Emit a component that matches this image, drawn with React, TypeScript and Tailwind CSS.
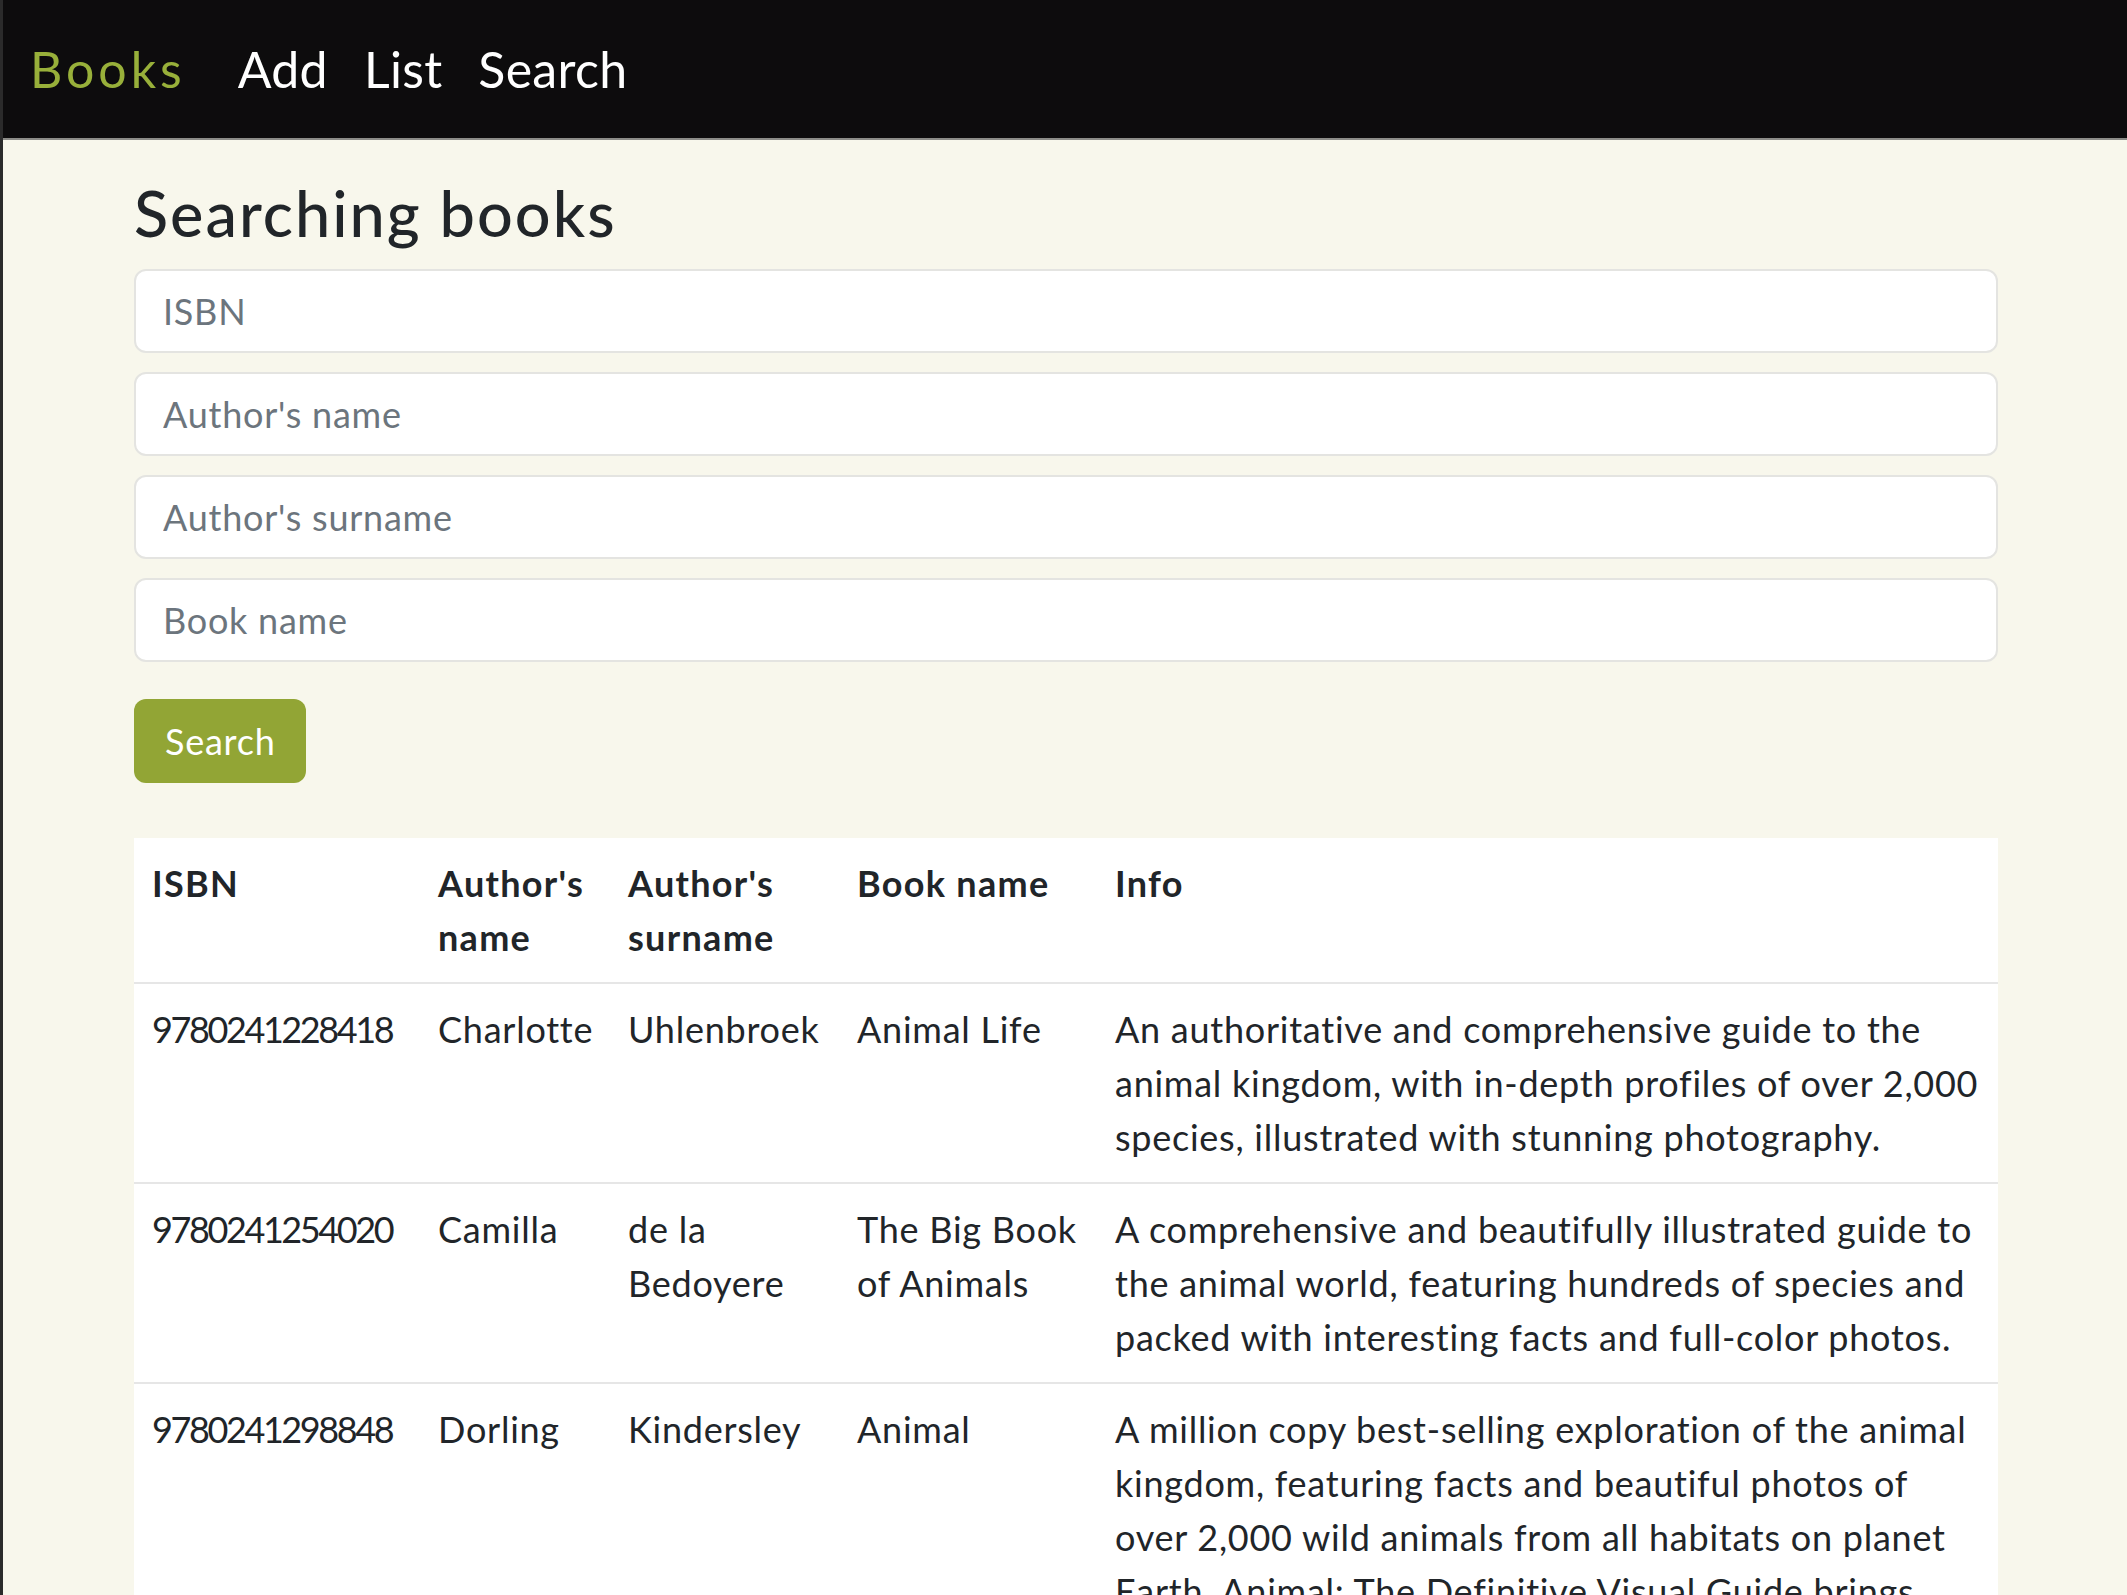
import React from "react";

type Book = {
  isbn: string;
  name: string;
  surname: string;
  title: string;
  info: string;
};

const books: Book[] = [
  {
    isbn: "9780241228418",
    name: "Charlotte",
    surname: "Uhlenbroek",
    title: "Animal Life",
    info: "An authoritative and comprehensive guide to the animal kingdom, with in-depth profiles of over 2,000 species, illustrated with stunning photography.",
  },
  {
    isbn: "9780241254020",
    name: "Camilla",
    surname: "de la Bedoyere",
    title: "The Big Book of Animals",
    info: "A comprehensive and beautifully illustrated guide to the animal world, featuring hundreds of species and packed with interesting facts and full-color photos.",
  },
  {
    isbn: "9780241298848",
    name: "Dorling",
    surname: "Kindersley",
    title: "Animal",
    info: "A million copy best-selling exploration of the animal kingdom, featuring facts and beautiful photos of over 2,000 wild animals from all habitats on planet Earth. Animal: The Definitive Visual Guide brings together the expertise of leading zoologists.",
  },
];

const fields = ["ISBN", "Author's name", "Author's surname", "Book name"];

export default function App() {
  return (
    <div className="min-h-screen border-l-[3px] border-[#2b2b2b] bg-[#f8f7ec] font-['Lato',sans-serif] text-[#212529]">
      <nav className="flex h-[140px] items-center border-b-2 border-[#8c8c88] bg-[#0d0c0d] pl-[27px] text-[50px] tracking-[0.3px]">
        <a href="#" className="mr-[34px] tracking-[4px] text-[#98b03a]">
          Books
        </a>
        <a href="#" className="px-[18px] text-white">
          Add
        </a>
        <a href="#" className="px-[18px] text-white">
          List
        </a>
        <a href="#" className="px-[18px] text-white">
          Search
        </a>
      </nav>

      <main className="pl-[131px] pr-[129px] pt-[35px]">
        <h3 className="mb-[18px] text-[63px] font-medium leading-[1.2] tracking-[2px]">Searching books</h3>

        <form className="flex flex-col gap-[19px]" onSubmit={(e) => e.preventDefault()}>
          {fields.map((f) => (
            <input
              key={f}
              placeholder={f}
              className="h-[84px] w-full rounded-[12px] border-2 border-[#e4e4e1] bg-white px-[27px] text-[36px] tracking-[0.75px] outline-none placeholder:text-[#6c757d]"
            />
          ))}
          <div>
            <button
              type="submit"
              className="mt-[18px] h-[84px] rounded-[12px] bg-[#92a535] px-[31px] text-[36px] tracking-[0.75px] text-white"
            >
              Search
            </button>
          </div>
        </form>

        <table className="mt-[55px] w-full table-fixed border-collapse bg-white text-left text-[36px] leading-[54px] tracking-[0.75px]">
          <colgroup>
            <col className="w-[286px]" />
            <col className="w-[190px]" />
            <col className="w-[229px]" />
            <col className="w-[258px]" />
            <col />
          </colgroup>
          <thead>
            <tr className="border-b-2 border-[#e6e6e6]">
              <th className="p-[18px] align-top font-bold tracking-[1.3px]">ISBN</th>
              <th className="p-[18px] align-top font-bold tracking-[1.3px]">Author's name</th>
              <th className="p-[18px] align-top font-bold tracking-[1.3px]">Author's surname</th>
              <th className="p-[18px] align-top font-bold tracking-[1.3px]">Book name</th>
              <th className="p-[18px] align-top font-bold tracking-[1.3px]">Info</th>
            </tr>
          </thead>
          <tbody>
            {books.map((b) => (
              <tr key={b.isbn} className="border-b-2 border-[#e6e6e6]">
                <td className="p-[18px] align-top tracking-[-2.4px]">{b.isbn}</td>
                <td className="p-[18px] align-top">{b.name}</td>
                <td className="p-[18px] align-top">{b.surname}</td>
                <td className="p-[18px] align-top">{b.title}</td>
                <td className="p-[18px] align-top">{b.info}</td>
              </tr>
            ))}
          </tbody>
        </table>
      </main>
    </div>
  );
}
